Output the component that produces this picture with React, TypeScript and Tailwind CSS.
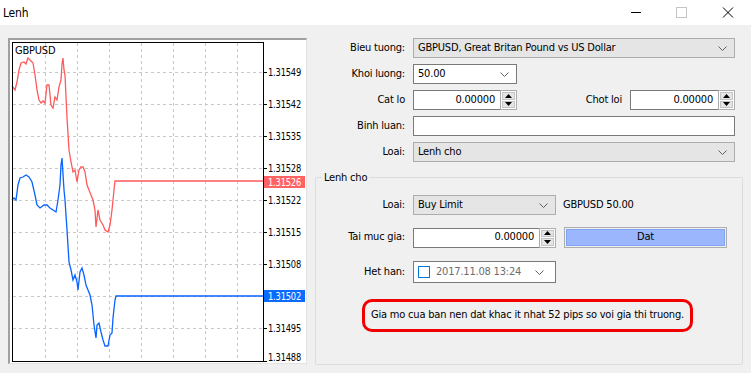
import React from 'react';

const red = [
  [12, 86], [15, 90], [17, 82], [19, 70], [21, 63], [24, 62], [26, 64], [28, 58], [31, 61], [33, 63],
  [35, 75], [37, 90], [39, 100], [41, 103], [43, 101], [45, 103], [47, 85], [49, 85], [51, 105],
  [53, 108], [55, 97], [57, 100], [59, 87], [61, 80], [62, 64], [63, 58], [64, 70], [65, 75],
  [67, 118], [69, 150], [71, 162], [73, 172], [75, 170], [77, 182], [79, 170], [81, 167], [83, 167],
  [85, 172], [87, 185], [89, 190], [91, 195], [93, 200], [95, 210], [96, 227], [98, 210], [100, 220],
  [103, 225], [105, 230], [108, 232], [110, 225], [112, 210], [114, 190], [115, 181], [263, 181],
];

const blue = [
  [12, 200], [14, 198], [16, 200], [18, 185], [20, 178], [23, 177], [26, 175], [29, 177], [32, 182],
  [35, 195], [37, 205], [40, 208], [44, 205], [47, 205], [50, 208], [53, 210], [56, 212], [58, 200],
  [60, 185], [61, 165], [62, 158], [64, 190], [65, 200], [67, 230], [69, 262], [71, 270], [73, 280],
  [75, 275], [77, 282], [78, 290], [80, 272], [82, 268], [84, 275], [86, 285], [88, 290], [90, 295],
  [92, 305], [94, 325], [96, 338], [97, 325], [99, 323], [101, 332], [103, 340], [105, 346], [108, 346],
  [110, 335], [112, 333], [113, 318], [115, 300], [116, 296], [263, 296],
];

const levels = [
  { y: 72, t: '1.31549' },
  { y: 104, t: '1.31542' },
  { y: 136, t: '1.31535' },
  { y: 168, t: '1.31528' },
  { y: 200, t: '1.31522' },
  { y: 232, t: '1.31515' },
  { y: 264, t: '1.31508' },
  { y: 296, t: '' },
  { y: 328, t: '1.31495' },
];

const cols = [45, 77, 109, 141, 173, 205, 237];
const axisFont = "'DejaVu Sans Condensed', 'Liberation Sans', sans-serif";

function Chevron() {
  return (
    <svg width="9" height="5" viewBox="0 0 9 5" className="shrink-0">
      <polyline points="0.5,0.5 4.5,4.5 8.5,0.5" fill="none" stroke="#606060" strokeWidth="1" />
    </svg>
  );
}

function Combo({ value, w, white }: { value: string; w?: string; white?: boolean }) {
  return (
    <div
      className={`h-[20px] flex items-center justify-between pl-[4px] pr-[7px] border ${
        white ? 'bg-white border-[#7a7a7a]' : 'bg-[#e5e5e5] border-[#adadad]'
      } ${w ?? 'flex-1'}`}
    >
      <span>{value}</span>
      <Chevron />
    </div>
  );
}

function Spin({ value, w }: { value: string; w: string }) {
  return (
    <div className={`h-[20px] flex ${w}`}>
      <div className="flex-1 h-full bg-white border border-[#7a7a7a] border-r-0 flex items-center justify-end pr-[5px]">
        {value}
      </div>
      <div className="w-[17px] h-full flex flex-col border border-[#adadad] bg-white p-px gap-px">
        <div className="flex-1 bg-[#e5e5e5] border border-[#c4c4c4] flex items-center justify-center">
          <svg width="7" height="4" viewBox="0 0 7 4"><polygon points="0,4 3.5,0 7,4" fill="#000" /></svg>
        </div>
        <div className="flex-1 bg-[#e5e5e5] border border-[#c4c4c4] flex items-center justify-center">
          <svg width="7" height="4" viewBox="0 0 7 4"><polygon points="0,0 3.5,4 7,0" fill="#000" /></svg>
        </div>
      </div>
    </div>
  );
}

function Label({ x, y, t, fill = '#000' }: { x: number; y: number; t: string; fill?: string }) {
  return (
    <text x={x} y={y} fill={fill} fontFamily={axisFont} fontSize="10" textLength="33" lengthAdjust="spacingAndGlyphs">
      {t}
    </text>
  );
}

function Chart() {
  return (
    <div className="w-[299px] h-[326px] border-t-2 border-l-2 border-[#a0a0a0] border-r border-b border-r-[#e3e3e3] border-b-[#e3e3e3] bg-white">
      <svg width="296" height="323" viewBox="10 40 296 323" className="block">
        {levels.map((l) => (
          <line key={l.y} x1="13" x2="262" y1={l.y + 0.5} y2={l.y + 0.5} stroke="#c8c8c8" strokeDasharray="3 3" />
        ))}
        {cols.map((x) => (
          <line key={x} x1={x + 0.5} x2={x + 0.5} y1="43" y2="360" stroke="#c8c8c8" strokeDasharray="3 3" />
        ))}
        <polyline points={red.map((p) => p.join(',')).join(' ')} fill="none" stroke="#ff5a5a" strokeWidth="1.3" />
        <polyline points={blue.map((p) => p.join(',')).join(' ')} fill="none" stroke="#0a62ff" strokeWidth="1.3" />
        <rect x="12.5" y="42.5" width="251" height="319" fill="none" stroke="#000" />
        {levels.map((l) => (
          <line key={'t' + l.y} x1="264" x2="267" y1={l.y + 0.5} y2={l.y + 0.5} stroke="#000" />
        ))}
        <line x1="264" x2="267" y1="361.5" y2="361.5" stroke="#000" />
        <text x="15" y="54" fontFamily={axisFont} fontSize="11" fill="#000">GBPUSD</text>
        {levels.map((l) => (l.t ? <Label key={'l' + l.y} x={268} y={l.y + 4} t={l.t} /> : null))}
        <Label x={268} y={361} t="1.31488" />
        <rect x="264" y="176" width="41" height="12" fill="#ff6262" />
        <Label x={268} y={186} t="1.31526" fill="#fff" />
        <rect x="264" y="290" width="41" height="12" fill="#0a6cff" />
        <Label x={268} y={300} t="1.31502" fill="#fff" />
      </svg>
    </div>
  );
}

export default function App() {
  return (
    <div className="w-[751px] h-[373px] overflow-hidden bg-[#f0f0f0] text-[11px] tracking-[-0.2px] text-black font-['DejaVu_Sans_Condensed','Liberation_Sans',sans-serif]">
      {/* title bar */}
      <div className="h-[25px] bg-white flex items-center pl-[3px] text-[12px]">
        <span>Lenh</span>
        <div className="ml-auto flex items-center">
          <svg width="46" height="25" viewBox="0 0 46 25">
            <line x1="18" x2="28" y1="12.5" y2="12.5" stroke="#000" />
          </svg>
          <svg width="46" height="25" viewBox="0 0 46 25">
            <rect x="17.5" y="7.5" width="10" height="10" fill="none" stroke="#c4c4c4" />
          </svg>
          <svg width="46" height="25" viewBox="0 0 46 25">
            <path d="M18 7.5 L28 17.5 M28 7.5 L18 17.5" stroke="#000" strokeWidth="1" />
          </svg>
        </div>
      </div>

      <div className="flex pt-[13px] pl-[8px]">
        <Chart />

        {/* form */}
        <div className="ml-[8px] w-[428px] flex flex-col">
          <div className="flex flex-col gap-[6px] pr-[8px]">
            <div className="flex items-center h-[20px]">
              <span className="w-[98px] pr-[8px] text-right">Bieu tuong:</span>
              <Combo value="GBPUSD, Great Britan Pound vs US Dollar" />
            </div>
            <div className="flex items-center h-[20px]">
              <span className="w-[98px] pr-[8px] text-right">Khoi luong:</span>
              <Combo value="50.00" w="w-[104px]" white />
            </div>
            <div className="flex items-center h-[20px]">
              <span className="w-[98px] pr-[8px] text-right">Cat lo</span>
              <Spin value="0.00000" w="w-[104px]" />
              <span className="w-[113px] pr-[8px] text-right">Chot loi</span>
              <Spin value="0.00000" w="w-[105px]" />
            </div>
            <div className="flex items-center h-[20px]">
              <span className="w-[98px] pr-[8px] text-right">Binh luan:</span>
              <div className="flex-1 h-[20px] bg-white border border-[#7a7a7a]" />
            </div>
            <div className="flex items-center h-[20px]">
              <span className="w-[98px] pr-[8px] text-right">Loai:</span>
              <Combo value="Lenh cho" />
            </div>
          </div>

          {/* group */}
          <div className="relative mt-[15px] h-[188px] border border-[#dcdcdc] rounded-[2px] pt-[17px]">
            <span className="absolute -top-[8px] left-[6px] px-[2px] bg-[#f0f0f0]">Lenh cho</span>
            <div className="flex items-center h-[20px]">
              <span className="w-[97px] pr-[8px] text-right">Loai:</span>
              <Combo value="Buy Limit" w="w-[143px]" />
              <span className="ml-[7px]">GBPUSD 50.00</span>
            </div>
            <div className="flex items-center h-[21px] mt-[12px]">
              <span className="w-[97px] pr-[8px] text-right">Tai muc gia:</span>
              <Spin value="0.00000" w="w-[143px]" />
              <div className="ml-[8px] w-[163px] h-[21px] border border-[#adadad] p-px">
                <div className="w-full h-full bg-[#9bb6fc] border border-[#7fa3f5] flex items-center justify-center">
                  Dat
                </div>
              </div>
            </div>
            <div className="flex items-center h-[22px] mt-[13px]">
              <span className="w-[97px] pr-[8px] text-right">Het han:</span>
              <div className="w-[143px] h-[22px] bg-white border border-[#7a7a7a] flex items-center pl-[4px] pr-[11px]">
                <div className="w-[12px] h-[12px] border border-[#0078d7] shrink-0" />
                <span className="ml-[6px] w-[86px] overflow-hidden whitespace-nowrap text-[#6d6d6d]">2017.11.08 13:24</span>
                <div className="ml-auto">
                  <Chevron />
                </div>
              </div>
            </div>
            <div className="ml-[46px] mt-[16px] w-[331px] h-[33px] border-[3px] border-[#f00000] rounded-[10px] flex items-center justify-center">
              Gia mo cua ban nen dat khac it nhat 52 pips so voi gia thi truong.
            </div>
          </div>
        </div>
      </div>
    </div>
  );
}
